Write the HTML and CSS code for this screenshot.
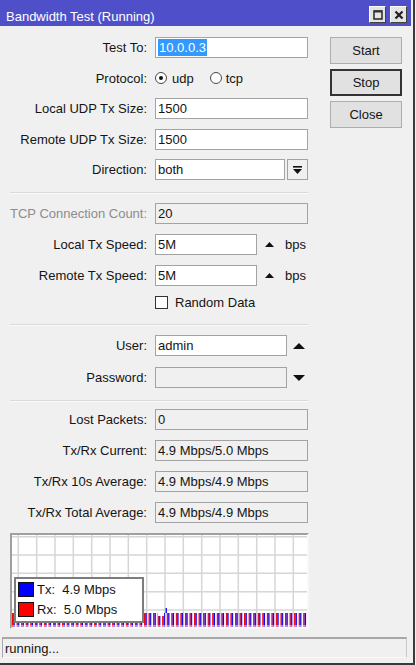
FILE: index.html
```html
<!DOCTYPE html>
<html>
<head>
<meta charset="utf-8">
<title>Bandwidth Test</title>
<link rel="stylesheet" href="styles.css">
</head>
<body>
<div class="window">
  <div class="titlebar">
    <span class="title">Bandwidth Test (Running)</span>
    <div class="tbtns">
      <span class="tbtn"><svg width="10" height="10" viewBox="0 0 10 10"><rect x="1" y="1" width="8" height="8" fill="none" stroke="#303030" stroke-width="1.6"/><rect x="1" y="0.5" width="8" height="2" fill="#303030"/></svg></span>
      <span class="tbtn"><svg width="10" height="10" viewBox="0 0 10 10"><path d="M1.5 1.5 L8.5 8.5 M8.5 1.5 L1.5 8.5" stroke="#202020" stroke-width="2.2"/></svg></span>
    </div>
  </div>
  <div class="main">
    <div class="form">
      <div class="section s1">
        <div class="row"><span class="lbl">Test To:</span><div class="field w153"><span class="sel">10.0.0.3</span></div></div>
        <div class="row"><span class="lbl">Protocol:</span>
          <div class="radios"><span class="radio on"></span><span class="rtxt">udp</span><span class="radio r2"></span><span class="rtxt">tcp</span></div>
        </div>
        <div class="row"><span class="lbl">Local UDP Tx Size:</span><div class="field w153">1500</div></div>
        <div class="row"><span class="lbl">Remote UDP Tx Size:</span><div class="field w153">1500</div></div>
        <div class="row"><span class="lbl">Direction:</span><div class="field w130">both</div>
          <span class="ddbtn"><svg width="9" height="8" viewBox="0 0 9 8"><rect x="0" y="0" width="9" height="1.6" fill="#111"/><polygon points="0,3 9,3 4.5,8" fill="#111"/></svg></span>
        </div>
      </div>
      <div class="sep sep1"></div>
      <div class="section s2">
        <div class="row"><span class="lbl dim">TCP Connection Count:</span><div class="field w153 ro">20</div></div>
        <div class="row"><span class="lbl">Local Tx Speed:</span><div class="field w102">5M</div>
          <svg class="up" width="9" height="5" viewBox="0 0 9 5"><polygon points="0,5 9,5 4.5,0" fill="#111"/></svg><span class="unit">bps</span></div>
        <div class="row"><span class="lbl">Remote Tx Speed:</span><div class="field w102">5M</div>
          <svg class="up" width="9" height="5" viewBox="0 0 9 5"><polygon points="0,5 9,5 4.5,0" fill="#111"/></svg><span class="unit">bps</span></div>
        <div class="row crow"><span class="lbl"></span><span class="check"></span><span class="ctxt">Random Data</span></div>
      </div>
      <div class="sep sep2"></div>
      <div class="section s3">
        <div class="row"><span class="lbl">User:</span><div class="field w132">admin</div>
          <svg class="arr" width="12" height="6" viewBox="0 0 12 6"><polygon points="0,6 12,6 6,0" fill="#111"/></svg></div>
        <div class="row"><span class="lbl">Password:</span><div class="field w132 ro"></div>
          <svg class="arr" width="12" height="6" viewBox="0 0 12 6"><polygon points="0,0 12,0 6,6" fill="#111"/></svg></div>
      </div>
      <div class="sep sep3"></div>
      <div class="section s4">
        <div class="row"><span class="lbl">Lost Packets:</span><div class="field w153 ro">0</div></div>
        <div class="row"><span class="lbl">Tx/Rx Current:</span><div class="field w153 ro">4.9 Mbps/5.0 Mbps</div></div>
        <div class="row"><span class="lbl">Tx/Rx 10s Average:</span><div class="field w153 ro">4.9 Mbps/4.9 Mbps</div></div>
        <div class="row"><span class="lbl">Tx/Rx Total Average:</span><div class="field w153 ro">4.9 Mbps/4.9 Mbps</div></div>
      </div>
    </div>
    <div class="buttons">
      <span class="btn">Start</span>
      <span class="btn def">Stop</span>
      <span class="btn">Close</span>
    </div>
  </div>
  <div class="graph">
    <svg width="295" height="92" viewBox="0 0 295 92">
      <defs>
        <pattern id="bars" x="0" y="0" width="4.55" height="92" patternUnits="userSpaceOnUse">
          <rect x="0" y="0" width="1.4" height="92" fill="#ff0000"/>
          <rect x="1.4" y="0" width="1.4" height="92" fill="#0000ff"/>
        </pattern>
      </defs>
      <g stroke="#d6d6d6" stroke-width="1.5">
        <line x1="6.3" y1="0" x2="6.3" y2="92"/>
        <line x1="24.7" y1="0" x2="24.7" y2="92"/>
        <line x1="43" y1="0" x2="43" y2="92"/>
        <line x1="61.3" y1="0" x2="61.3" y2="92"/>
        <line x1="79.7" y1="0" x2="79.7" y2="92"/>
        <line x1="98" y1="0" x2="98" y2="92"/>
        <line x1="116.3" y1="0" x2="116.3" y2="92"/>
        <line x1="134.7" y1="0" x2="134.7" y2="92"/>
        <line x1="153" y1="0" x2="153" y2="92"/>
        <line x1="171.3" y1="0" x2="171.3" y2="92"/>
        <line x1="189.7" y1="0" x2="189.7" y2="92"/>
        <line x1="208" y1="0" x2="208" y2="92"/>
        <line x1="226.3" y1="0" x2="226.3" y2="92"/>
        <line x1="244.7" y1="0" x2="244.7" y2="92"/>
        <line x1="263" y1="0" x2="263" y2="92"/>
        <line x1="281.3" y1="0" x2="281.3" y2="92"/>
        <line x1="0" y1="1.7" x2="295" y2="1.7"/>
        <line x1="0" y1="20" x2="295" y2="20"/>
        <line x1="0" y1="38.3" x2="295" y2="38.3"/>
        <line x1="0" y1="56.7" x2="295" y2="56.7"/>
        <line x1="0" y1="75" x2="295" y2="75"/>
      </g>
      <rect x="0" y="78" width="295" height="14" fill="url(#bars)"/>
      <rect x="146" y="78" width="6" height="3" fill="#fff"/>
      <rect x="153.6" y="73" width="1.3" height="5" fill="#0000ff"/>
      <rect x="0" y="90" width="295" height="2" fill="#fff" opacity="0.45"/>
    </svg>
    <div class="legend">
      <div class="lrow"><span class="sw tx"></span><span class="ltxt">Tx:  4.9 Mbps</span></div>
      <div class="lrow"><span class="sw rx"></span><span class="ltxt">Rx:  5.0 Mbps</span></div>
    </div>
  </div>
  <div class="status">running...</div>
</div>
</body>
</html>
```

FILE: styles.css
```css
* { box-sizing: border-box; }
html, body { margin: 0; padding: 0; }
body {
  background: #f0f0f0;
  font-family: "Liberation Sans", Arial, sans-serif;
  font-size: 13px;
  color: #141414;
  width: 416px;
  height: 665px;
  overflow: hidden;
}
.window {
  width: 415px;
  height: 665px;
  background: #f0f0f0;
  border-right: 2px solid #3a3a3a;
  border-bottom: 2px solid #3a3a3a;
  display: flex;
  flex-direction: column;
}
.titlebar {
  height: 26px;
  flex: none;
  background: #4f4fc9;
  margin-right: 2px;
  display: flex;
  justify-content: space-between;
  padding: 0 4px 0 6px;
  color: #fff;
}
.title { line-height: 15px; padding-top: 9px; }
.tbtns { display: flex; gap: 4px; margin-top: 6px; }
.tbtn {
  width: 17px;
  height: 17px;
  background: #e4e4e4;
  border: 1px solid;
  border-color: #fafafa #404040 #404040 #fafafa;
  display: flex;
  align-items: center;
  justify-content: center;
}
.tbtn svg { display: block; }
.main { display: flex; padding-top: 11px; flex: none; }
.form { width: 308px; padding-left: 10px; display: flex; flex-direction: column; }
.section { display: flex; flex-direction: column; }
.s1 { gap: 9.5px; }
.s2 { gap: 10px; }
.s3 { gap: 11px; }
.s4 { gap: 10px; }
.row { display: flex; align-items: center; height: 21px; }
.crow { height: 13px; }
.lbl { width: 137px; flex: none; text-align: right; margin-right: 8px; white-space: nowrap; }
.dim { color: #8c8c8c; }
.sep { height: 2px; border-top: 1px solid #d9d9d9; border-bottom: 1px solid #fbfbfb; }
.sep1 { margin: 12px 0 9px; }
.sep2 { margin: 15px 0 9px; }
.sep3 { margin: 12px 0 7px; }
.field {
  height: 21px;
  flex: none;
  border: 1px solid #a3a3a3;
  background: #fff;
  padding-left: 2px;
  display: flex;
  align-items: center;
  white-space: nowrap;
}
.ro { background: #f0f0f0; }
.w153 { width: 153px; }
.w130 { width: 130px; }
.w132 { width: 132px; }
.w102 { width: 102px; }
.sel { background: #3399ff; color: #fff; line-height: 17px; padding: 0 1px; margin-left: 0; }
.radios { display: flex; align-items: center; }
.radio {
  width: 12px;
  height: 12px;
  border-radius: 50%;
  border: 1px solid #4a4a4a;
  background: #fff;
  margin-right: 5px;
  position: relative;
}
.radio.on::after {
  content: "";
  position: absolute;
  left: 3px;
  top: 3px;
  width: 4px;
  height: 4px;
  border-radius: 50%;
  background: #111;
}
.r2 { margin-left: 16px; margin-right: 4px; }
.ddbtn {
  width: 21px;
  height: 21px;
  margin-left: 2px;
  border: 1px solid #a3a3a3;
  background: #f0f0f0;
  display: flex;
  align-items: center;
  justify-content: center;
}
.up { margin-left: 8px; display: block; }
.unit { margin-left: 11px; }
.arr { margin-left: 6px; display: block; }
.check { width: 13px; height: 13px; border: 1px solid #333; background: #fff; flex: none; }
.ctxt { margin-left: 7px; }
.buttons { margin-left: 22px; display: flex; flex-direction: column; gap: 5px; }
.btn {
  width: 72px;
  height: 27px;
  border: 1px solid #adadad;
  background: #e1e1e1;
  display: flex;
  align-items: center;
  justify-content: center;
}
.btn.def { border: 2px solid #333; }
.graph {
  position: relative;
  margin: 10px 0 0 10px;
  width: 299px;
  height: 96px;
  flex: none;
  border: 2px solid;
  border-color: #a0a0a0 #f8f8f8 #f8f8f8 #a0a0a0;
  background: #fff;
}
.graph svg { display: block; }
.legend {
  position: absolute;
  left: 2px;
  top: 42px;
  width: 130px;
  height: 46px;
  border: 2px solid #7d7d7d;
  background: #fff;
  padding: 3px 0 0 2px;
  display: flex;
  flex-direction: column;
  gap: 5px;
}
.lrow { display: flex; align-items: center; height: 15px; }
.sw { width: 16px; height: 15px; border: 1px solid #111; flex: none; }
.tx { background: #0000ff; }
.rx { background: #ff0000; }
.ltxt { margin-left: 3px; white-space: pre; }
.status {
  margin: 8px 0 0 2px;
  width: 405px;
  height: 21px;
  flex: none;
  border: 1px solid;
  border-top: 2px solid #a8a8a8;
  border-color: #a8a8a8 #c8c8c8 #f8f8f8 #a8a8a8;
  padding-left: 2px;
  display: flex;
  align-items: center;
}
```
